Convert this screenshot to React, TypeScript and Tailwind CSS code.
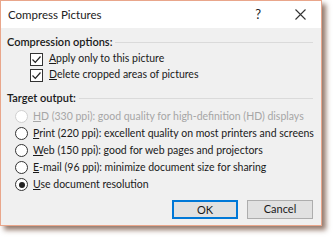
import React from 'react';

const font = { fontFamily: 'Lato, "Noto Sans", sans-serif' };

function Check({ label, keyChar }: { label: string; keyChar: string }) {
  return (
    <div className="flex items-center h-[16px]">
      <div className="w-[13px] h-[13px] shrink-0 border border-[#333] bg-white flex items-center justify-center">
        <svg width="11" height="11" viewBox="0 0 11 11">
          <path d="M1.5 5.5 L4.3 8.3 L9.5 2.5" fill="none" stroke="#222" strokeWidth="1.2" />
        </svg>
      </div>
      <span className="ml-[6px] whitespace-nowrap">
        <span className="underline">{keyChar}</span>
        {label}
      </span>
    </div>
  );
}

function Radio({
  keyChar,
  label,
  checked,
  disabled,
}: {
  keyChar: string;
  label: string;
  checked?: boolean;
  disabled?: boolean;
}) {
  return (
    <div className={`flex items-center h-[17px] ${disabled ? 'text-[#a6a6a6]' : 'text-[#1a1a1a]'}`}>
      <div
        className={`w-[13px] h-[13px] shrink-0 rounded-full border bg-white flex items-center justify-center ${
          disabled ? 'border-[#d0d0d0]' : 'border-[#333]'
        }`}
      >
        {checked && <div className="w-[6px] h-[6px] rounded-full bg-[#222]" />}
      </div>
      <span className="ml-[5px] whitespace-nowrap">
        <span className="underline">{keyChar}</span>
        {label}
      </span>
    </div>
  );
}

export default function App() {
  return (
    <div className="w-[334px] h-[240px] bg-white overflow-hidden" style={font}>
      <div className="w-[322px] h-[226px] border border-[#e9a68b] bg-[#f0f0f0] flex flex-col shadow-[4px_4px_5px_rgba(90,50,30,0.65)] text-[10.5px] text-[#1a1a1a]">
        <div className="h-[27px] bg-white flex items-center pl-[7px] shrink-0">
          <span className="text-[11.5px] text-[#222] whitespace-nowrap">Compress Pictures</span>
          <span className="ml-auto text-[13px] text-[#222] mr-[34px]">?</span>
          <svg width="11" height="11" viewBox="0 0 11 11" className="mr-[15px]">
            <path d="M0.5 0.5 L10.5 10.5 M10.5 0.5 L0.5 10.5" stroke="#333" strokeWidth="1.1" />
          </svg>
        </div>
        <div className="flex flex-col px-[6px] pt-[6px]">
          <div className="flex items-center h-[16px]">
            <span className="font-semibold text-[11px] whitespace-nowrap">Compression options:</span>
            <div className="flex-1 h-px bg-[#dadada] ml-[3px] mr-[2px]" />
          </div>
          <div className="flex flex-col pl-[23px] mt-[1px]">
            <Check keyChar="A" label="pply only to this picture" />
            <Check keyChar="D" label="elete cropped areas of pictures" />
          </div>
          <div className="flex items-center h-[16px] mt-[7px]">
            <span className="font-semibold text-[11px] whitespace-nowrap">Target output:</span>
            <div className="flex-1 h-px bg-[#dadada] ml-[3px] mr-[2px]" />
          </div>
          <div className="flex flex-col pl-[8px] mt-[2px]">
            <Radio disabled keyChar="H" label="D (330 ppi): good quality for high-definition (HD) displays" />
            <Radio keyChar="P" label="rint (220 ppi): excellent quality on most printers and screens" />
            <Radio keyChar="W" label="eb (150 ppi): good for web pages and projectors" />
            <Radio keyChar="E" label="-mail (96 ppi): minimize document size for sharing" />
            <Radio checked keyChar="U" label="se document resolution" />
          </div>
          <div className="flex justify-end gap-[9px] mt-[7px] mr-[2px]">
            <button className="w-[66px] h-[19px] bg-[#e1e1e1] border-2 border-[#0078d7] text-[11px] text-[#1a1a1a]">
              OK
            </button>
            <button className="w-[66px] h-[19px] bg-[#e1e1e1] border border-[#adadad] text-[11px] text-[#1a1a1a]">
              Cancel
            </button>
          </div>
        </div>
      </div>
    </div>
  );
}
